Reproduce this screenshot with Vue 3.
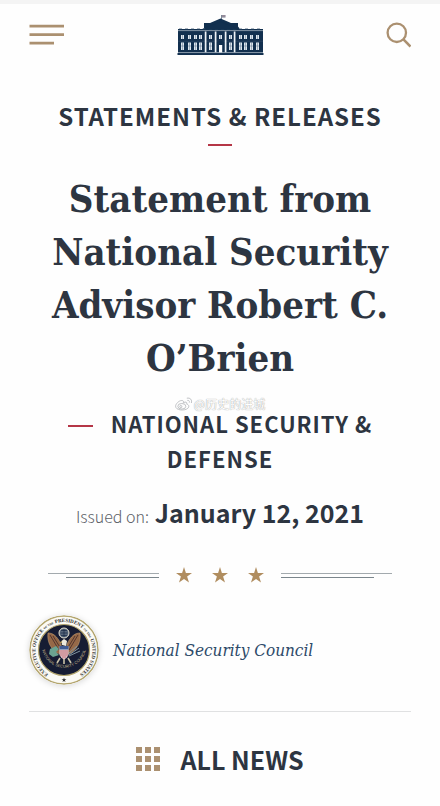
<script setup>
const windows = [4, 11, 17, 22, 32, 42, 52, 62, 67, 73, 79]
const columns = [28, 38, 48, 57]
const dentils = Array.from({ length: 14 }, (_, i) => 2 + i * 6)
const cells = [0, 9, 18]
const stars = [1, 2, 3]
const starPoints = '8,0 9.9,5.9 16,5.9 11.1,9.5 13,15.6 8,12 3,15.6 4.9,9.5 0,5.9 6.1,5.9'
</script>

<template>
  <div class="page">
    <header class="topbar">
      <button class="icon-button" type="button" aria-label="Menu">
        <svg width="35" height="22" viewBox="0 0 35 22" fill="none" stroke="#ab9070" stroke-width="2.8">
          <path d="M0.5 2.2H35M0.5 10.7H35M0.5 19.2H25" />
        </svg>
      </button>
      <a class="home" href="#" aria-label="The White House">
        <svg width="87" height="42" viewBox="0 0 87 42">
          <path d="M44.5 5V1" stroke="#59677a" stroke-width="0.8" />
          <path d="M45 1h3.5v2.6H45z" fill="#858a9c" />
          <path d="M45 2h3.5" stroke="#b98994" stroke-width="0.6" />
          <path d="M27 15V9H33L43.5 4.5 54 9H61V12.500L63 15Z" fill="#12304f" />
          <path d="M24 15.500L43.500 7.500 63 15.500Z" fill="#12304f" />
          <path d="M1 15H86V38.500H1Z" fill="#12304f" />
          <path d="M1 16.600H86" stroke="#8495a6" stroke-width="1" />
          <path d="M1 27.200H86" stroke="#3b536c" stroke-width="0.5" />
          <path v-for="x in dentils" :key="'d' + x" :d="`M${x} 14.600h3`" stroke="#8d9aaa" stroke-width="0.8" />
          <path d="M25 15.200L43.500 8 62 15.200Z" fill="#12304f" />
          <path v-for="x in columns" :key="'c' + x" :d="`M${x + 0.6} 17.500V38.500`" stroke="#eef3f7" stroke-width="1.700" />
          <g v-for="x in windows" :key="'w' + x" fill="#dfe7ee">
            <rect :x="x" y="21" width="3" height="4" />
            <rect :x="x" y="28.500" width="3" height="7.500" />
            <path :d="`M${x + 1.5} 21v4M${x + 1.5} 28.500v7.500M${x} 32h3`" stroke="#5d738a" stroke-width="0.500" />
          </g>
          <path d="M40.500 27h6v4h-6z" fill="#12304f" />
          <path d="M42 31h3.200v8H42z" fill="#fff" />
          <path d="M0.500 39H86.500V41H0.500Z" fill="#12304f" />
          <path d="M1 38.600H86" stroke="#7f92a5" stroke-width="0.600" />
        </svg>
      </a>
      <button class="icon-button" type="button" aria-label="Search">
        <svg width="25" height="26" viewBox="0 0 25 26" fill="none" stroke="#ab9070" stroke-width="2.300">
          <circle cx="10.800" cy="10.800" r="9.200" />
          <path d="M17.200 17.200L24.500 24.500" stroke-width="2.600" />
        </svg>
      </button>
    </header>

    <main class="article">
      <p class="eyebrow">STATEMENTS &amp; RELEASES</p>
      <div class="dash"></div>

      <div class="headline">
        <h1 class="title">Statement from National Security Advisor Robert C. O’Brien</h1>
        <div class="watermark">
          <svg width="18" height="14" viewBox="0 0 18 14" fill="none" stroke="#b9bbbe" stroke-width="0.900">
            <path d="M7 3.500C4 3.500 0.800 7 0.800 9.200 0.800 14.500 14 14 14 9.300 14 8 13 7.500 12 7.200 12.500 5 11 4.500 8.500 5.700 9 4.300 8.500 3.500 7 3.500Z" />
            <ellipse cx="7" cy="9.300" rx="4" ry="2.800" />
            <circle cx="6" cy="9.600" r="1.100" />
            <path d="M12 1.200C15.500 0.500 17.500 3 16.500 6M12.500 3.400C14 3.200 15 4 14.500 5.600" />
          </svg>
          <span>@历史的进城</span>
        </div>
      </div>

      <p class="category"><span class="dash category-dash"></span>NATIONAL SECURITY &amp; DEFENSE</p>

      <p class="issued"><span class="issued-label">Issued on:</span> <time datetime="2021-01-12">January 12, 2021</time></p>

      <div class="divider">
        <div class="rules"></div>
        <div class="stars">
          <svg v-for="s in stars" :key="s" width="16" height="16" viewBox="0 0 16 16">
            <polygon :points="starPoints" fill="#b08d5f" />
          </svg>
        </div>
        <div class="rules rules-right"></div>
      </div>
    </main>

    <section class="author">
      <svg class="seal" width="70" height="70" viewBox="0 0 70 70">
        <defs>
          <path id="seal-ring" d="M25.800 62.400A28.500 28.500 0 1 1 44.200 62.400" />
          <path id="seal-inner" d="M13 34A22.300 22.300 0 0 0 57 34" />
        </defs>
        <circle cx="35" cy="35" r="34" fill="#fbfaf5" stroke="#b3a56d" stroke-width="1.500" />
        <circle cx="35" cy="35" r="25.500" fill="#161c33" stroke="#b3a56d" stroke-width="1.200" />
        <text class="seal-text">
          <textPath href="#seal-ring" startOffset="50%" text-anchor="middle">EXECUTIVE OFFICE <tspan class="seal-small">OF THE</tspan> PRESIDENT <tspan class="seal-small">OF THE</tspan> UNITED STATES</textPath>
        </text>
        <polygon :points="starPoints" transform="translate(32.6 62.4) scale(0.3)" fill="#30302f" />
        <circle cx="35" cy="18" r="5" fill="#58677b" stroke="#e8e5d4" stroke-width="1" />
        <path d="M32 15.500h6M31.500 18h7M32 20.500h6M35 14v8" stroke="#182845" stroke-width="0.700" />
        <path d="M32 29C28 21 24 18 19 18 18 26 21 33 28 38L33 39ZM38 29C42 21 46 18 51 18 52 26 49 33 42 38L37 39Z" fill="#966948" stroke="#c39c70" stroke-width="0.600" />
        <path d="M21 20L30 35M24 21L32 34M49 20L40 35M46 21L38 34" stroke="#49302c" stroke-width="0.900" />
        <path d="M33 30L32.500 26 35 24 38 26 37 31Z" fill="#eee9dc" />
        <path d="M32.500 26L30.800 27.500 33 28Z" fill="#d3b05a" />
        <path d="M30.500 31h9v9Q38 43 35 44.500 32 43 30.500 40Z" fill="#e9e2e2" />
        <path d="M30.500 31h9v3.500h-9z" fill="#415b94" />
        <path d="M32 35v6.500M34 35v8.500M36 35v8.500M38 35v6.500" stroke="#b74552" stroke-width="0.900" />
        <path d="M21 34L27 31 30 34 27 37 30 40 24 42 20 39Z" fill="#6ba391" />
        <path d="M40 40L50 33M40 41L51 36M40 38L48 31" stroke="#80949f" stroke-width="1" />
        <path d="M31 43L28 48M35 44V49M39 43L42 48" stroke="#cac1a6" stroke-width="1.600" />
        <text class="seal-inner-text">
          <textPath href="#seal-inner" startOffset="50%" text-anchor="middle">NATIONAL SECURITY COUNCIL</textPath>
        </text>
      </svg>
      <a class="author-link" href="#">National Security Council</a>
    </section>

    <a class="all-news" href="#">
      <svg width="24" height="24" viewBox="0 0 24 24" fill="#ab9070">
        <template v-for="y in cells" :key="y">
          <rect v-for="x in cells" :key="x" :x="x" :y="y" width="6" height="6" />
        </template>
      </svg>
      <span>ALL NEWS</span>
    </a>
  </div>
</template>

<style>
body {
  margin: 0;
  background: #fefefe;
}
</style>

<style scoped>
.page {
  font-family: "Noto Sans CJK SC", "Open Sans", sans-serif;
  color: #2d3541;
  border-top: 4px solid #f4f4f4;
}

.topbar {
  display: grid;
  grid-template-columns: 1fr auto 1fr;
  align-items: center;
  height: 62px;
  padding: 0 29px;
}

.icon-button {
  display: flex;
  justify-self: start;
  padding: 0;
  border: 0;
  background: none;
}

.icon-button:last-child {
  justify-self: end;
}

.home {
  display: flex;
}

.article {
  padding: 34px 48px 0;
  text-align: center;
}

.eyebrow {
  margin: 0 0 12px;
  font-size: 24px;
  font-weight: 700;
  line-height: 32px;
  letter-spacing: 1px;
}

.dash {
  width: 24px;
  height: 2px;
  margin: 0 auto;
  background: #b53647;
}

.headline {
  position: relative;
  margin-top: 26px;
}

.title {
  margin: 0;
  font-family: "DejaVu Serif Condensed", "DejaVu Serif", serif;
  font-size: 38px;
  font-weight: 700;
  line-height: 53px;
}

.watermark {
  position: absolute;
  top: 224px;
  left: 50%;
  display: flex;
  align-items: center;
  gap: 1px;
  transform: translateX(-50%);
  color: #fff;
  font-size: 12px;
  line-height: 16px;
  white-space: nowrap;
  text-shadow: 0 0 1px #999, 0 0 1px #ccc;
}

.category {
  margin: 22px 0 0;
  font-size: 22px;
  font-weight: 700;
  line-height: 35px;
  letter-spacing: 1px;
}

.category-dash {
  display: inline-block;
  width: 25px;
  margin-right: 18px;
  vertical-align: 6px;
}

.issued {
  margin: 17px 0 0;
  font-size: 25px;
  font-weight: 700;
  line-height: 38px;
  white-space: nowrap;
}

.issued-label {
  color: #5c6167;
  font-size: 16px;
  font-weight: 300;
}

.divider {
  display: flex;
  align-items: center;
  gap: 17px;
  margin-top: 32px;
}

.stars {
  display: flex;
  gap: 20px;
}

.rules {
  flex: 1;
  height: 4px;
  border-top: 1px solid #a3aaae;
}

.rules::after {
  content: "";
  display: block;
  height: 1px;
  margin: 3px 0 0 18px;
  background: #7b868c;
}

.rules-right::after {
  margin: 3px 18px 0 0;
}

.author {
  display: flex;
  align-items: center;
  gap: 14px;
  margin: 0 29px;
  padding: 32px 0 26px;
  border-bottom: 1px solid #e0e1e2;
}

.seal {
  border-radius: 50%;
  box-shadow: 0 1px 6px #d8d8d8;
}

.seal-text {
  fill: #30302f;
  font-family: "Liberation Serif", serif;
  font-size: 5px;
  font-weight: 700;
}

.seal-small {
  font-size: 3px;
}

.seal-inner-text {
  fill: #c2b58a;
  font-family: "Liberation Sans", sans-serif;
  font-size: 4px;
}

.author-link {
  color: #2d4a69;
  font-family: "DejaVu Serif Condensed", "DejaVu Serif", serif;
  font-size: 17px;
  font-style: italic;
  line-height: 28px;
  text-decoration: none;
}

.all-news {
  display: flex;
  align-items: center;
  justify-content: center;
  gap: 20px;
  padding: 28px 0 8px;
  color: inherit;
  font-size: 25px;
  font-weight: 700;
  line-height: 38px;
  text-decoration: none;
}
</style>
